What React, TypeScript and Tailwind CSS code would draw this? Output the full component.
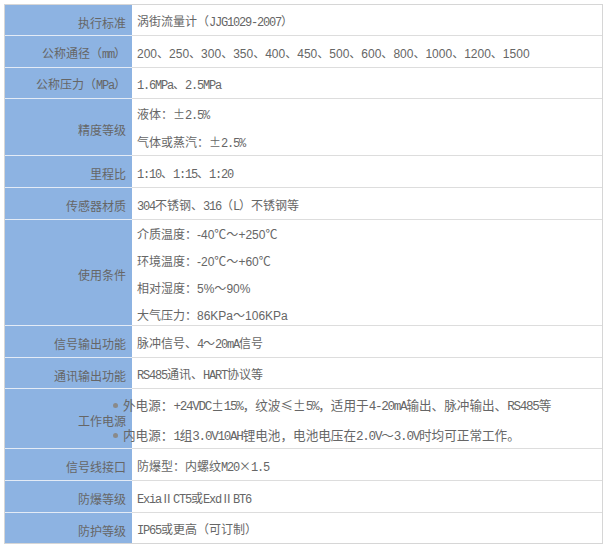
import React from "react";

const MONO = "font-['Liberation_Mono'] tracking-[-0.1em]";
const SANS = "font-['Liberation_Sans']";

function seg(s: string, sans = false) {
  return s
    .split(/([\x20-\x7E]+)/)
    .filter((p) => p !== "")
    .map((p, i) =>
      /^[\x20-\x7E]+$/.test(p) ? (
        <span key={i} className={sans ? SANS : MONO}>
          {p}
        </span>
      ) : (
        <span key={i}>{p}</span>
      )
    );
}

type Row = {
  label: string;
  h: string;
  lines?: string[];
  sans?: boolean;
  list?: string[];
};

const rows: Row[] = [
  { label: "执行标准", h: "h-[31px]", lines: ["涡街流量计（JJG1029-2007）"] },
  {
    label: "公称通径（mm）",
    h: "h-[32px]",
    sans: true,
    lines: ["200、250、300、350、400、450、500、600、800、1000、1200、1500"],
  },
  { label: "公称压力（MPa）", h: "h-[31px]", lines: ["1.6MPa、2.5MPa"] },
  { label: "精度等级", h: "h-[57px]", lines: ["液体：±2.5%", "气体或蒸汽：±2.5%"] },
  { label: "里程比", h: "h-[32px]", lines: ["1:10、1:15、1:20"] },
  { label: "传感器材质", h: "h-[32px]", lines: ["304不锈钢、316（L）不锈钢等"] },
  {
    label: "使用条件",
    h: "h-[106px]",
    sans: true,
    lines: ["介质温度：-40℃～+250℃", "环境温度：-20℃～+60℃", "相对湿度：5%～90%", "大气压力：86KPa～106KPa"],
  },
  { label: "信号输出功能", h: "h-[32px]", lines: ["脉冲信号、4～20mA信号"] },
  { label: "通讯输出功能", h: "h-[31px]", lines: ["RS485通讯、HART协议等"] },
  {
    label: "工作电源",
    h: "h-[60px]",
    list: [
      "外电源：+24VDC±15%，纹波≤±5%，适用于4-20mA输出、脉冲输出、RS485等",
      "内电源：1组3.0V10AH锂电池，电池电压在2.0V～3.0V时均可正常工作。",
    ],
  },
  { label: "信号线接口", h: "h-[32px]", lines: ["防爆型：内螺纹M20×1.5"] },
  { label: "防爆等级", h: "h-[32px]", lines: ["ExiaⅡCT5或ExdⅡBT6"] },
  { label: "防护等级", h: "h-[30px]", lines: ["IP65或更高（可订制）"] },
];

export default function App() {
  return (
    <div className="min-h-[547px] bg-white pt-[4px] pl-[4px] font-['Noto_Sans_CJK_SC','Noto_Sans',sans-serif] text-[12px] text-[#666]">
      <div className="w-[599px] border border-[#d6d6d6]">
        {rows.map((r, idx) => {
          const last = idx === rows.length - 1;
          return (
            <div key={idx} className="flex">
              <div
                className={`w-[127px] shrink-0 bg-[#8db3e2] flex items-center justify-end pr-[6px] pt-[4px] ${r.h} ${
                  last ? "" : "border-b border-[#e3ebf6]"
                }`}
              >
                <span className="leading-[25px] whitespace-nowrap">{seg(r.label)}</span>
              </div>
              <div
                className={`flex-1 bg-white flex flex-col justify-center pl-[5px] pt-[4px] ${r.h} ${
                  last ? "" : "border-b border-[#dddddd]"
                }`}
              >
                {r.lines &&
                  r.lines.map((l, i) => (
                    <div key={i} className="leading-[25px] whitespace-nowrap">
                      {seg(l, r.sans)}
                    </div>
                  ))}
                {r.list && (
                  <ul className="-ml-[24px] text-[12.6px]">
                    {r.list.map((l, i) => (
                      <li key={i} className="flex items-center leading-[27px] whitespace-nowrap">
                        <span className="w-[5px] h-[5px] rounded-full bg-[#8a8a8a] mr-[5px] shrink-0" />
                        <span>{seg(l)}</span>
                      </li>
                    ))}
                  </ul>
                )}
              </div>
            </div>
          );
        })}
      </div>
    </div>
  );
}
